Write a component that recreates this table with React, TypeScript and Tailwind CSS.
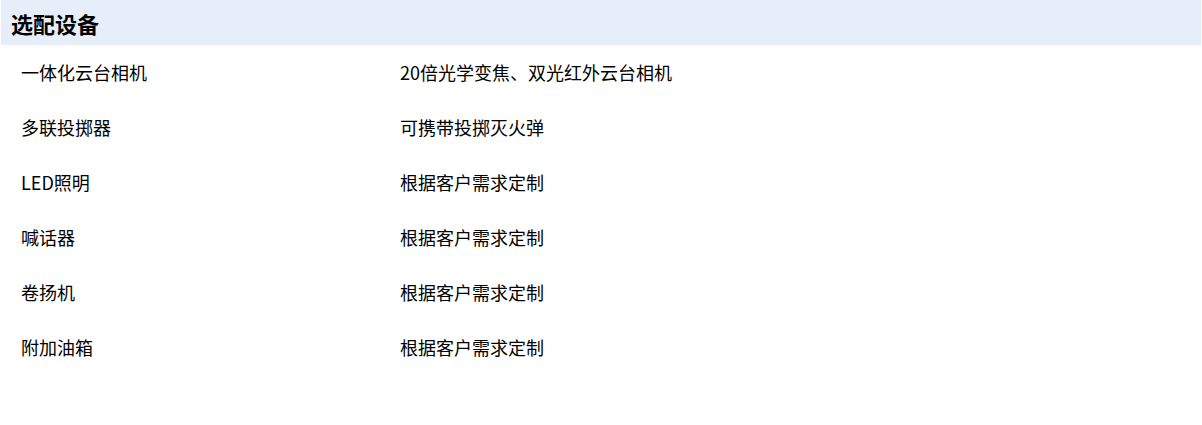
import React from 'react';

const rows = [
  { name: '一体化云台相机', desc: '20倍光学变焦、双光红外云台相机' },
  { name: '多联投掷器', desc: '可携带投掷灭火弹' },
  { name: 'LED照明', desc: '根据客户需求定制' },
  { name: '喊话器', desc: '根据客户需求定制' },
  { name: '卷扬机', desc: '根据客户需求定制' },
  { name: '附加油箱', desc: '根据客户需求定制' },
];

const App: React.FC = () => {
  return (
    <div
      className="w-[1202px] h-[425px] bg-white text-black"
      style={{ fontFamily: '"Microsoft YaHei", "Noto Sans CJK SC", "Noto Sans", sans-serif' }}
    >
      <div className="mx-px">
        {/* Section title */}
        <div className="h-[45px] bg-[#e5eef9] flex items-center px-[10px]">
          <h2 className="text-[22px] font-bold leading-none">选配设备</h2>
        </div>

        {/* Options list */}
        <div className="flex flex-col">
          {rows.map((row, i) => (
            <div key={i} className="flex h-[55px] items-center text-[18px] font-normal">
              <div className="w-[399px] pl-[20px]">{row.name}</div>
              <div className="flex-1">{row.desc}</div>
            </div>
          ))}
        </div>
      </div>
    </div>
  );
};

export default App;
